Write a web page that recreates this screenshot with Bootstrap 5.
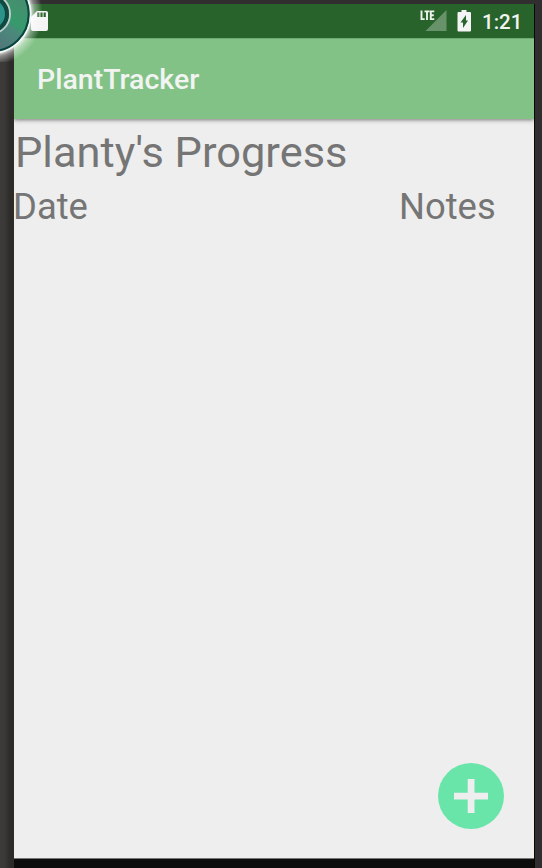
<!DOCTYPE html>
<html lang="en">
<head>
<meta charset="utf-8">
<meta name="viewport" content="width=device-width, initial-scale=1">
<title>PlantTracker</title>
<link href="https://cdn.jsdelivr.net/npm/bootstrap@5.3.0/dist/css/bootstrap.min.css" rel="stylesheet">
<style>
body{font-family:Roboto,sans-serif;background:#302e2e;height:868px}
.device{height:868px;padding:4px 7px 0 14px;background:linear-gradient(90deg,#3d3b39 0,#3b3937 5px,#2d2b28 10px,#2d2b28 14px,#302e2f 14px)}
.screen{border-right:1px solid #080808;background:#eee;color:#757575}
.statusbar{height:34px;background:#28632b;color:#f2f4f2;padding:0 13px 0 17px}
.battery{margin-left:10px}
.clock{font-size:20.5px;line-height:34px;padding-top:1px;font-weight:500;width:39px;margin-left:10px;white-space:nowrap}
.appbar{height:81px;background:#83c287;padding:0 23px;box-shadow:0 1px 4px rgba(0,0,0,.5);clip-path:inset(0 0 -8px 0);border-top:1px solid #6fa973}
.appname{font-size:28.5px;line-height:82px;font-weight:500;color:#f2f4f2}
.plant-title{font-size:43.4px;line-height:52px;font-weight:400;padding:8px 0 0 1px;margin:0;white-space:nowrap}
.heads{font-size:36.4px;line-height:44px;padding-top:6px;margin-left:-1px}
.notes-head{width:135px}
.add{width:66px;height:66px;background:#69e5aa;margin:0 30.5px 29.500px 0}
.navstrip{height:10px;background:#0c0c0c;border-top:1px solid #777}
.floating-logo{left:0;top:0}
</style>
</head>
<body class="overflow-hidden">
<div class="device d-flex position-relative">
  <main class="screen d-flex flex-column flex-grow-1">
    <div class="statusbar d-flex align-items-center">
      <svg width="17" height="20" viewBox="0 0 17 20" aria-label="SD card"><path fill="#f4f4f4" d="M6 0h9q2 0 2 2v16q0 2-2 2H2q-2 0-2-2V6z"/><path fill="#28632b" d="M6.200 1.500h2.200v4.500H6.200zM9.400 1.500h2.200v4.500H9.400zM12.600 1.500h2.200v4.500h-2.200z"/></svg>
      <svg class="ms-auto" width="27" height="22" viewBox="0 0 27 22" aria-label="LTE signal"><path fill="#68926a" d="M26.500 0v21h-21z"/><path fill="#28632b" d="M5 0h10v11H5z"/><path fill="none" stroke="#eef2ee" stroke-width="1.900" d="M1.500 .5v8.600h3.200M4.500 1.400h5M7 1.400v8.600M14.300 1.400h-3.500v7.700h3.500M10.800 5.200h3"/></svg>
      <svg class="battery" width="15" height="22" viewBox="0 0 15 22" aria-label="Battery charging"><path fill="#f4f4f4" d="M4.500 0h5v2H13q1 0 1 1v17.500q0 1-1 1H1.500q-1 0-1-1V3q0-1 1-1h3z"/><path fill="#28632b" d="M9 5v5.500h2L6 18v-5.500H3.500z"/></svg>
      <span class="clock">1:21</span>
    </div>
    <header class="appbar"><div class="appname">PlantTracker</div></header>
    <h1 class="plant-title">Planty's Progress</h1>
    <div class="heads d-flex justify-content-between"><span>Date</span><span class="notes-head">Notes</span></div>
    <button class="add btn rounded-circle border-0 p-0 mt-auto align-self-end d-flex align-items-center justify-content-center" aria-label="Add">
      <svg width="34" height="34" viewBox="0 0 34 34"><path fill="#eee" d="M13.700 0h6.800v13.700H34v6.800H20.500V34h-6.800V20.500H0v-6.800h13.700z"/></svg>
    </button>
    <div class="navstrip"></div>
  </main>
  <svg class="floating-logo position-absolute" width="62" height="62" viewBox="0 0 62 62" aria-hidden="true">
    <defs>
      <radialGradient id="halo" gradientUnits="userSpaceOnUse" cx="-8.500" cy="14" r="54"><stop offset=".72" stop-color="#fff" stop-opacity=".85"/><stop offset=".8" stop-color="#fff" stop-opacity=".4"/><stop offset=".95" stop-color="#fff" stop-opacity="0"/></radialGradient>
      <linearGradient id="disc" gradientUnits="userSpaceOnUse" x1="0" y1="48" x2="26" y2="8"><stop stop-color="#52777a"/><stop offset=".45" stop-color="#4b897c"/><stop offset=".6" stop-color="#369a6c"/><stop offset="1" stop-color="#44906e"/></linearGradient>
    </defs>
    <circle cx="-8.500" cy="14" r="54" fill="url(#halo)"/>
    <circle cx="-8.500" cy="14" r="39" fill="url(#disc)" stroke="#f3f7f5" stroke-width="2"/>
    <circle cx="-8.500" cy="14" r="37.200" fill="none" stroke="#06463f" stroke-width="2"/>
    <circle cx="-10" cy="14" r="20" fill="#2b9389" stroke="#c0cdca" stroke-width="2"/>
    <circle cx="-10" cy="14" r="17" fill="none" stroke="#10493f" stroke-width="4"/>
  </svg>
</div>
<script src="https://cdn.jsdelivr.net/npm/bootstrap@5.3.0/dist/js/bootstrap.bundle.min.js"></script>
</body>
</html>
